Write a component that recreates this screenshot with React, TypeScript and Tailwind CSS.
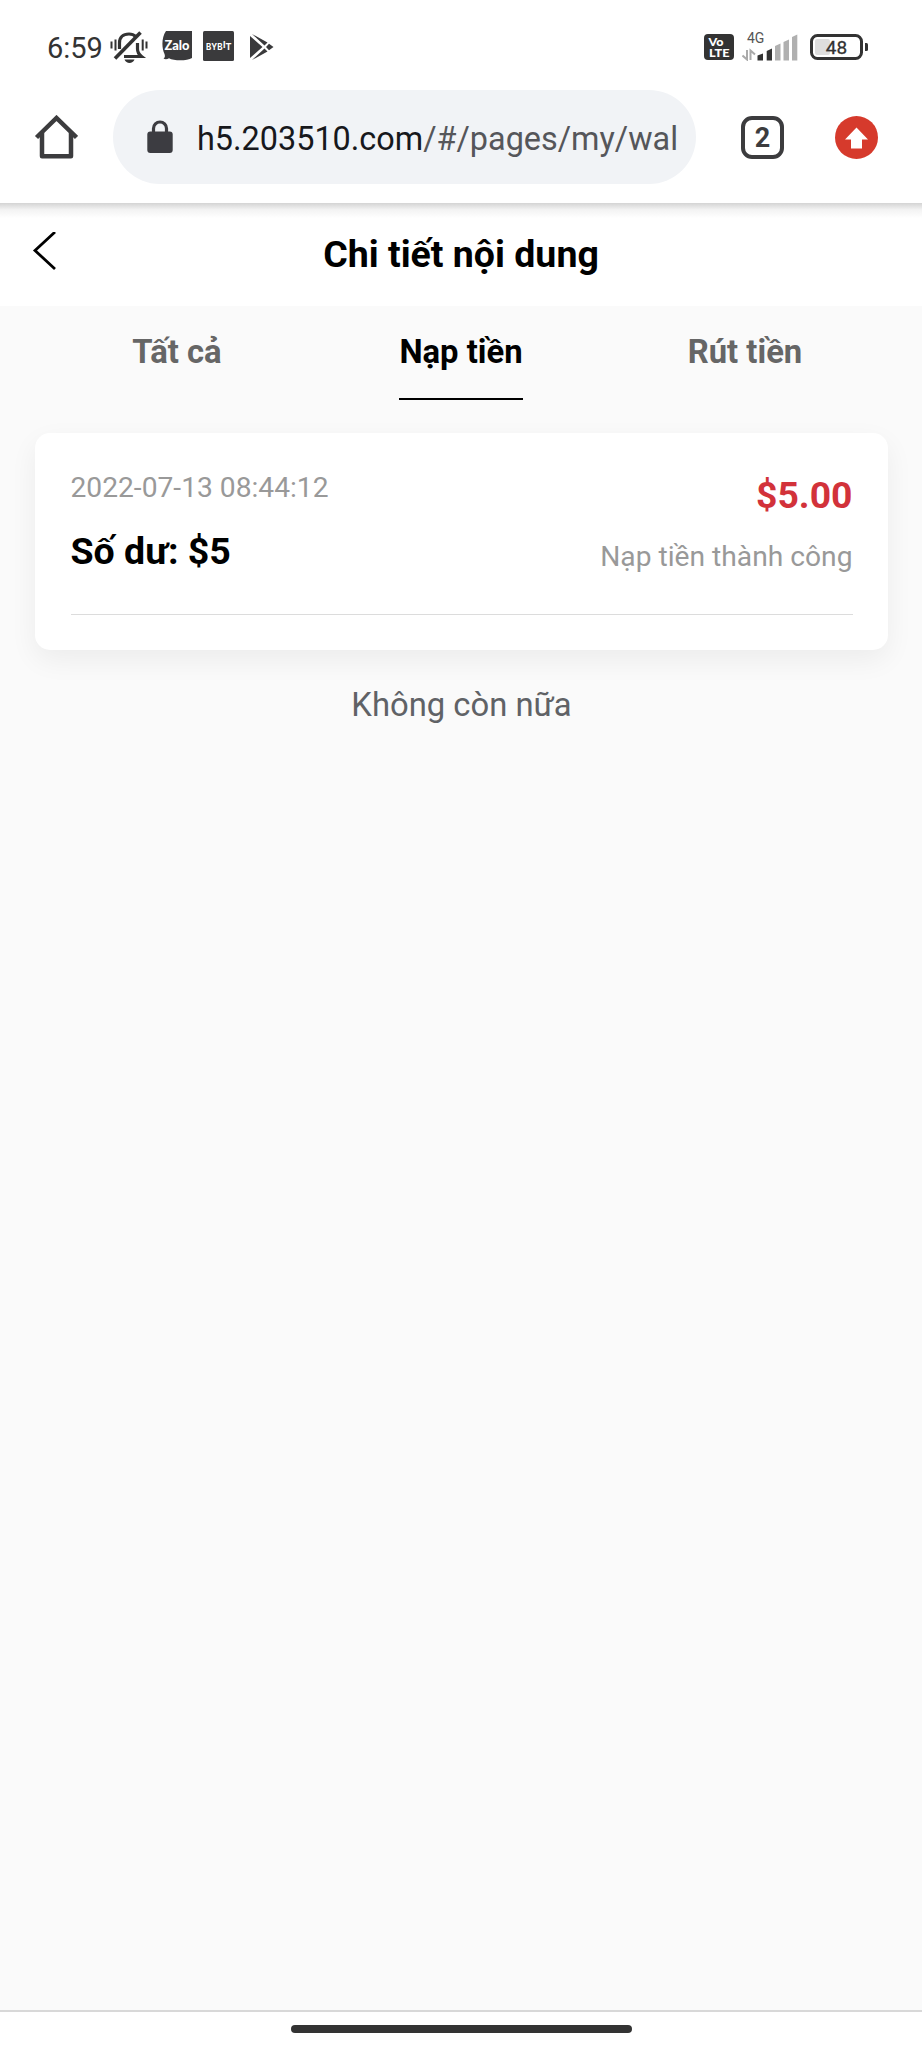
interface Tab {
  id: string;
  label: string;
}

interface Transaction {
  time: string;
  balance: string;
  amount: string;
  status: string;
}

const TABS: Tab[] = [
  { id: "all", label: "Tất cả" },
  { id: "deposit", label: "Nạp tiền" },
  { id: "withdraw", label: "Rút tiền" },
];

const TRANSACTIONS: Transaction[] = [
  {
    time: "2022-07-13 08:44:12",
    balance: "Số dư: $5",
    amount: "$5.00",
    status: "Nạp tiền thành công",
  },
];

function MutedBell() {
  return (
    <svg width="38" height="34" viewBox="0 0 38 34" fill="none" stroke="#333" strokeWidth="3.200">
      <path d="M9.500 19V13C9.500 7.500 13 4 19 4C22 4 24.200 5 25.800 6.500" />
      <path d="M27.500 13V19C27.500 22.500 29 24.500 31.500 26.500H14" />
      <path d="M5 28.500L30.500 2.500" strokeWidth="3.600" />
      <path d="M14.500 29.500H24.500C23 34 16 34 14.500 29.500Z" fill="#333" stroke="none" />
      <path d="M1.500 11.500V18.500M5.500 9.500V20.500M32.700 9.500V20.500M36.500 11.500V18.500" strokeWidth="2" />
    </svg>
  );
}

function ZaloBadge() {
  return (
    <svg width="30" height="30" viewBox="0 0 30 30">
      <path d="M4 0H30V27C25 30 12 30 7 27.200C5 28.500 3 28.500 1.500 27.500C3 26.500 3.200 25 2.500 23C-.5 17 -.5 6 4 0Z" fill="#3a3a3c" />
      <text x="15" y="19" textAnchor="middle" fontFamily="Lato, sans-serif" fontSize="13" fontWeight="900" fill="#fff" textLength="25" lengthAdjust="spacingAndGlyphs">
        Zalo
      </text>
    </svg>
  );
}

function BybitBadge() {
  return (
    <svg width="31" height="30" viewBox="0 0 31 30">
      <rect width="31" height="30" rx="1.500" fill="#3a3a3c" />
      <g fontFamily="Inter, sans-serif" fontSize="9" fontWeight="700" fill="#fff">
        <text x="3" y="19" textLength="16.500" lengthAdjust="spacingAndGlyphs">BYB</text>
        <text x="20" y="16.500">I</text>
        <text x="22.500" y="19">T</text>
      </g>
    </svg>
  );
}

function PlayBadge() {
  return (
    <svg width="24" height="26" viewBox="0 0 24 26">
      <path d="M0 2L12.500 13L0 24Z" fill="#3a3a3c" />
      <path d="M2 0L17.500 8.500L14.500 11.500ZM2 26L17.500 17.500L14.500 14.500ZM16 13L19 9.800L23.500 13L19 16.200Z" fill="#3a3a3c" />
    </svg>
  );
}

function VoLteBadge() {
  return (
    <svg width="30" height="26" viewBox="0 0 30 26">
      <rect width="30" height="26" rx="4" fill="#333" />
      <g fontFamily="Lato, sans-serif" fontWeight="900" fill="#fff">
        <text x="4.500" y="12" fontSize="11.500" textLength="15" lengthAdjust="spacingAndGlyphs">Vo</text>
        <text x="5" y="22.500" fontSize="12" textLength="20.500" lengthAdjust="spacingAndGlyphs">LTE</text>
      </g>
    </svg>
  );
}

function Signal() {
  return (
    <svg width="57" height="30" viewBox="0 0 57 30">
      <text x="5" y="12" fontFamily="Roboto, sans-serif" fontSize="14" fill="#555">4G</text>
      <path d="M5 19V28.500L.5 24.500M8.500 29V19.500L13 23.500" fill="none" stroke="#aaa" strokeWidth="2" />
      <path d="M15.500 24.500L21 22.500V29.500H15.500ZM24.700 20L30 17.500V29.500H24.700Z" fill="#333" />
      <path d="M33 15L38.500 12.500V29.500H33ZM41.500 11L47 8.500V29.500H41.500ZM50 6L55.300 3.500V29.500H50Z" fill="#b0b0b0" />
    </svg>
  );
}

function Battery() {
  return (
    <svg width="59" height="26" viewBox="0 0 59 26">
      <rect x="5" y="5" width="15" height="16" rx="2" fill="#dedede" />
      <rect x="1.500" y="1.500" width="50" height="23" rx="6" fill="none" stroke="#333" strokeWidth="3" />
      <path d="M55 9H56.500Q58 9 58 10.500V15.500Q58 17 56.500 17H55Z" fill="#333" />
      <text x="26.500" y="20" textAnchor="middle" fontFamily="Roboto, sans-serif" fontSize="19" fill="#333" stroke="#333" strokeWidth=".3">
        48
      </text>
    </svg>
  );
}

function StatusBar() {
  return (
    <div className="flex h-[90px] items-start justify-between pl-[47px] pr-[53px] pt-[30px]">
      <div className="flex items-start">
        <span className="w-[63px] text-[29px] leading-[36px] text-[#333]">6:59</span>
        <MutedBell />
        <div className="ml-[14px] mt-px flex gap-[11px]">
          <ZaloBadge />
          <BybitBadge />
        </div>
        <div className="ml-[16px] mt-[4px]">
          <PlayBadge />
        </div>
      </div>
      <div className="flex items-start pt-[4px]">
        <VoLteBadge />
        <div className="-mt-[3px] ml-[8px]">
          <Signal />
        </div>
        <div className="ml-[11px]">
          <Battery />
        </div>
      </div>
    </div>
  );
}

function BrowserBar() {
  return (
    <div className="flex h-[94px] items-center">
      <svg className="ml-[34px]" width="44" height="44" viewBox="0 0 44 44" fill="none" stroke="#3c3c3e" strokeWidth="4.500" strokeLinejoin="round">
        <path d="M2.500 22.500L22.500 3L42.500 22.500" strokeLinejoin="miter" />
        <path d="M8 18V41.200H37V18" />
      </svg>

      {/* Address pill */}
      <div className="ml-[35px] flex h-full w-[583px] items-center rounded-full bg-[#f1f3f6] pl-[34px]">
        <svg width="26" height="34" viewBox="0 0 26 34">
          <path d="M6.500 14V8.500a6.500 6.500 0 0 1 13 0V14" fill="none" stroke="#3c3c41" strokeWidth="3.200" />
          <rect x=".3" y="11.500" width="25.400" height="21.500" rx="3" fill="#3c3c41" />
        </svg>
        <span className="ml-[24px] whitespace-nowrap pt-[3px] text-[32.400px] leading-[40px] text-[#55565a]">
          <span className="text-[#17181c]">h5.203510.com</span>/#/pages/my/wal
        </span>
      </div>

      <div className="ml-[45px] flex size-[43px] items-center justify-center rounded-[11px] border-[4.500px] border-[#3c3c3e] pt-[2px] text-[27px] font-bold leading-none text-[#3c3c3e]">
        2
      </div>
      <svg className="ml-[51px]" width="43" height="43" viewBox="0 0 43 43">
        <circle cx="21.500" cy="21.500" r="21.500" fill="#d63a2c" />
        <path d="M21.500 11.500L33 23.500H27V32.500H16V23.500H10Z" fill="#fff" />
      </svg>
    </div>
  );
}

function TransactionRow({ item }: { item: Transaction }) {
  return (
    <div className="flex h-[145px] justify-between border-b border-[#dcdcdc]">
      <div>
        <p className="text-[28.200px] leading-[36px] text-[#999]">{item.time}</p>
        <p className="mt-[25px] text-[37.500px] font-bold leading-[40px] text-black">{item.balance}</p>
      </div>
      <div className="pt-[5px] text-right">
        <p className="text-[37.300px] font-bold leading-[40px] text-[#d2323a]">{item.amount}</p>
        <p className="mt-[24px] text-[28.200px] leading-[36px] text-[#999]">{item.status}</p>
      </div>
    </div>
  );
}

export default function App() {
  const active = "deposit";

  return (
    <div className="flex h-[2048px] w-[922px] flex-col overflow-hidden bg-[#fafafa] font-[Roboto,sans-serif]">
      <div className="h-[203px] shrink-0 bg-white">
        <StatusBar />
        <BrowserBar />
      </div>

      {/* Page header */}
      <header className="flex h-[103px] shrink-0 flex-col bg-white">
        <div className="h-[15px] bg-linear-to-b from-[#d4d4d4] via-[#f3f3f3] via-45% to-white" />
        <div className="grid grid-cols-[1fr_auto_1fr] items-start pt-[14px]">
          <svg className="ml-[32px]" width="25" height="40" viewBox="0 0 25 40" fill="none" stroke="#000" strokeWidth="2.800">
            <path d="M23 0L3 18.500L23 37" />
          </svg>
          <h1 className="text-[37.500px] font-bold leading-[44px] text-black">Chi tiết nội dung</h1>
        </div>
      </header>

      {/* Tabs */}
      <nav className="grid h-[127px] shrink-0 grid-cols-3 justify-items-center px-[35px]">
        {TABS.map((tab) => (
          <button
            key={tab.id}
            className={
              tab.id === active
                ? "h-[94px] border-b-2 border-black pt-[1px] text-[32.800px] font-bold text-black"
                : "h-[94px] border-b-2 border-transparent pt-[1px] text-[32.800px] font-bold text-[#666]"
            }
          >
            {tab.label}
          </button>
        ))}
      </nav>

      <main className="flex-1 pl-[35px] pr-[34px]">
        <div className="h-[217px] rounded-[15px] bg-white px-[35.500px] pt-[37px] shadow-[0_10px_28px_rgba(0,0,0,0.06)]">
          {TRANSACTIONS.map((item) => (
            <TransactionRow key={item.time} item={item} />
          ))}
        </div>
        <p className="mt-[35px] text-center text-[32.800px] leading-[40px] text-[#606266]">Không còn nữa</p>
      </main>

      {/* Gesture bar */}
      <footer className="flex h-[38px] shrink-0 justify-center border-t-2 border-[#d8d8d8] bg-white pt-[13px]">
        <div className="h-[8px] w-[341px] rounded-full bg-[#333]" />
      </footer>
    </div>
  );
}
